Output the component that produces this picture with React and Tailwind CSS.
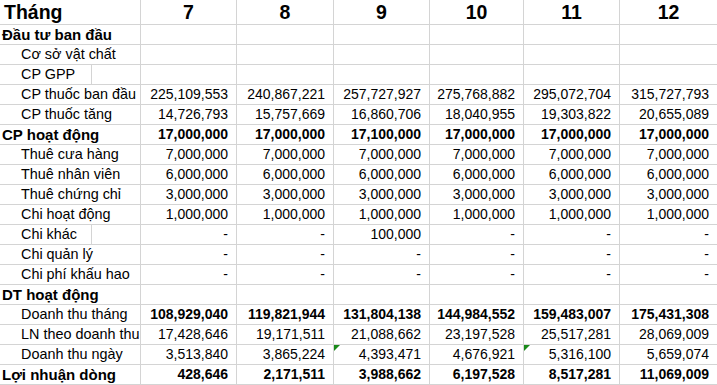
const months = ["7", "8", "9", "10", "11", "12"];
const empty = ["", "", "", "", "", ""];
const same = (v) => [v, v, v, v, v, v];

// label: bold = section header, split = label stays in first sub-column
const rows = [
    { label: "Đầu tư ban đầu", bold: true, vals: empty },
    { label: "Cơ sở vật chất", vals: empty },
    { label: "CP GPP", split: true, vals: empty },
    {
        label: "CP thuốc ban đầu",
        vals: ["225,109,553", "240,867,221", "257,727,927", "275,768,882", "295,072,704", "315,727,793"],
    },
    {
        label: "CP thuốc tăng",
        vals: ["14,726,793", "15,757,669", "16,860,706", "18,040,955", "19,303,822", "20,655,089"],
    },
    {
        label: "CP hoạt động",
        bold: true,
        boldVals: true,
        vals: ["17,000,000", "17,000,000", "17,100,000", "17,000,000", "17,000,000", "17,000,000"],
    },
    { label: "Thuê cưa hàng", vals: same("7,000,000") },
    { label: "Thuê nhân viên", vals: same("6,000,000") },
    { label: "Thuê chứng chỉ", vals: same("3,000,000") },
    { label: "Chi hoạt động", vals: same("1,000,000") },
    { label: "Chi khác", split: true, vals: ["-", "-", "100,000", "-", "-", "-"] },
    { label: "Chi quản lý", vals: same("-") },
    { label: "Chi phí khấu hao", vals: same("-") },
    { label: "DT hoạt động", bold: true, vals: empty },
    {
        label: "Doanh thu tháng",
        boldVals: true,
        vals: ["108,929,040", "119,821,944", "131,804,138", "144,984,552", "159,483,007", "175,431,308"],
    },
    {
        label: "LN theo doanh thu",
        vals: ["17,428,646", "19,171,511", "21,088,662", "23,197,528", "25,517,281", "28,069,009"],
    },
    {
        label: "Doanh thu ngày",
        flags: [2, 4],
        vals: ["3,513,840", "3,865,224", "4,393,471", "4,676,921", "5,316,100", "5,659,074"],
    },
    {
        label: "Lợi nhuận dòng",
        bold: true,
        boldVals: true,
        vals: ["428,646", "2,171,511", "3,988,662", "6,197,528", "8,517,281", "11,069,009"],
    },
];

const cell = "h-[20px] border-b border-[#d4d4d4] leading-[19px] whitespace-nowrap";

export default function App() {
    return (
        <div
            className="w-[717px] h-[385px] overflow-hidden bg-white text-black text-[14px]"
            style={{ fontFamily: '"Liberation Sans", Arial, sans-serif' }}
        >
            <div className="grid grid-cols-[92px_49px_96px_97px_96px_94px_96px_97px]">
                {/* Header */}
                <div className="col-span-2 h-[25px] border-b border-r border-[#d4d4d4] pl-[4px] text-[19.5px] font-bold leading-[24px]">
                    Tháng
                </div>
                {months.map((m, i) => (
                    <div
                        key={m}
                        className={`h-[25px] border-b border-[#d4d4d4] text-center text-[19.5px] font-bold leading-[24px] ${
                            i < 5 ? "border-r" : ""
                        }`}
                    >
                        {m}
                    </div>
                ))}

                {rows.map((row) => (
                    <div key={row.label} className="contents">
                        {row.split ? (
                            <>
                                <div className={`${cell} border-r pl-[21px] text-[14.4px]`}>{row.label}</div>
                                <div className={`${cell} border-r`} />
                            </>
                        ) : (
                            <div
                                className={`${cell} col-span-2 border-r ${
                                    row.bold ? "font-bold pl-[2px] text-[15px]" : "pl-[21px] text-[14.4px]"
                                }`}
                            >
                                {row.label}
                            </div>
                        )}
                        {row.vals.map((v, i) => (
                            <div
                                key={i}
                                className={`${cell} relative text-right pr-[8px] ${
                                    i < 5 ? "border-r" : ""
                                } ${row.boldVals ? "font-bold" : ""}`}
                            >
                                {row.flags && row.flags.includes(i) && (
                                    <svg
                                        className="absolute left-0 top-0"
                                        width="6"
                                        height="6"
                                        viewBox="0 0 6 6"
                                    >
                                        <polygon points="0,0 6,0 0,6" fill="#1a8a1a" />
                                    </svg>
                                )}
                                {v}
                            </div>
                        ))}
                    </div>
                ))}
            </div>
        </div>
    );
}
